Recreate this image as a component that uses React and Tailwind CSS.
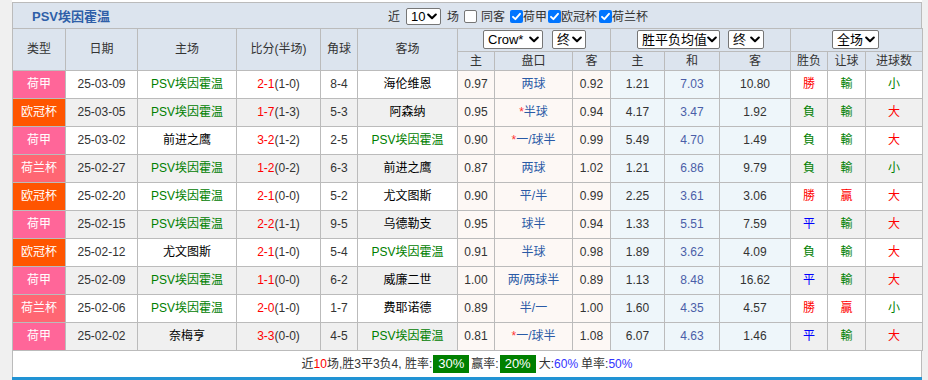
import React from "react";

const rows = [
  { t: "荷甲", d: "25-03-09", h: "PSV埃因霍温", hg: 1, s: "2-1", hs: "(1-0)", c: "8-4", a: "海伦维恩", ag: 0, o1: "0.97", pk: "两球", st: 0, o2: "0.92", w: "1.21", dr: "7.03", l: "10.80", r: "勝", rq: "輸", dx: "小" },
  { t: "欧冠杯", d: "25-03-05", h: "PSV埃因霍温", hg: 1, s: "1-7", hs: "(1-3)", c: "5-3", a: "阿森纳", ag: 0, o1: "0.95", pk: "半球", st: 1, o2: "0.94", w: "4.17", dr: "3.47", l: "1.92", r: "負", rq: "輸", dx: "大" },
  { t: "荷甲", d: "25-03-02", h: "前进之鹰", hg: 0, s: "3-2", hs: "(1-2)", c: "2-5", a: "PSV埃因霍温", ag: 1, o1: "0.90", pk: "一/球半", st: 1, o2: "0.99", w: "5.49", dr: "4.70", l: "1.49", r: "負", rq: "輸", dx: "大" },
  { t: "荷兰杯", d: "25-02-27", h: "PSV埃因霍温", hg: 1, s: "1-2", hs: "(0-2)", c: "6-3", a: "前进之鹰", ag: 0, o1: "0.87", pk: "两球", st: 0, o2: "1.02", w: "1.21", dr: "6.86", l: "9.79", r: "負", rq: "輸", dx: "小" },
  { t: "欧冠杯", d: "25-02-20", h: "PSV埃因霍温", hg: 1, s: "2-1", hs: "(0-0)", c: "5-2", a: "尤文图斯", ag: 0, o1: "0.90", pk: "平/半", st: 0, o2: "0.99", w: "2.25", dr: "3.61", l: "3.06", r: "勝", rq: "贏", dx: "大" },
  { t: "荷甲", d: "25-02-15", h: "PSV埃因霍温", hg: 1, s: "2-2", hs: "(1-1)", c: "9-5", a: "乌德勒支", ag: 0, o1: "0.95", pk: "球半", st: 0, o2: "0.94", w: "1.33", dr: "5.51", l: "7.59", r: "平", rq: "輸", dx: "大" },
  { t: "欧冠杯", d: "25-02-12", h: "尤文图斯", hg: 0, s: "2-1", hs: "(1-0)", c: "5-4", a: "PSV埃因霍温", ag: 1, o1: "0.91", pk: "半球", st: 0, o2: "0.98", w: "1.89", dr: "3.62", l: "4.09", r: "負", rq: "輸", dx: "大" },
  { t: "荷甲", d: "25-02-09", h: "PSV埃因霍温", hg: 1, s: "1-1", hs: "(0-0)", c: "6-2", a: "威廉二世", ag: 0, o1: "1.00", pk: "两/两球半", st: 0, o2: "0.89", w: "1.13", dr: "8.48", l: "16.62", r: "平", rq: "輸", dx: "大" },
  { t: "荷兰杯", d: "25-02-06", h: "PSV埃因霍温", hg: 1, s: "2-0", hs: "(1-0)", c: "1-7", a: "费耶诺德", ag: 0, o1: "0.89", pk: "半/一", st: 0, o2: "1.00", w: "1.60", dr: "4.35", l: "4.57", r: "勝", rq: "贏", dx: "小" },
  { t: "荷甲", d: "25-02-02", h: "奈梅亨", hg: 0, s: "3-3", hs: "(0-0)", c: "4-5", a: "PSV埃因霍温", ag: 1, o1: "0.81", pk: "一/球半", st: 1, o2: "1.08", w: "6.07", dr: "4.63", l: "1.46", r: "平", rq: "輸", dx: "大" },
];

const typeBg = {
  "荷甲": "bg-[#ff6699]",
  "欧冠杯": "bg-[#ff5500]",
  "荷兰杯": "bg-[#ff6673]",
};

const resColor = { "勝": "text-[#ff0000]", "負": "text-[#008000]", "平": "text-[#0000ff]", "輸": "text-[#008000]", "贏": "text-[#ff0000]", "小": "text-[#008000]", "大": "text-[#ff0000]" };

function Chevron() {
  return (
    <svg width="10" height="7" viewBox="0 0 10 7" className="shrink-0">
      <path d="M1.2 1.5 L5 5.2 L8.8 1.5" fill="none" stroke="#000" strokeWidth="2.1" strokeLinecap="round" strokeLinejoin="round" />
    </svg>
  );
}

function Sel({ label, className }) {
  return (
    <span className={"inline-flex items-center justify-between whitespace-nowrap border border-[#767676] rounded-[2px] bg-white pl-[4px] pr-[3px] text-[13px] leading-none text-black " + className}>
      <span className="whitespace-nowrap">{label}</span>
      <Chevron />
    </span>
  );
}

function Check({ on }) {
  if (!on) return <span className="inline-block w-[13px] h-[13px] border border-[#767676] rounded-[2px] bg-white" />;
  return (
    <span className="inline-flex items-center justify-center w-[13px] h-[13px] rounded-[2px] bg-[#0075ff]">
      <svg width="11" height="11" viewBox="0 0 11 11">
        <path d="M2 5.8 L4.4 8.2 L9 2.8" fill="none" stroke="#fff" strokeWidth="1.9" strokeLinecap="round" strokeLinejoin="round" />
      </svg>
    </span>
  );
}

const th = "border border-[#bbbbbb] bg-[#dce4ee] text-[#333] font-normal text-[12px] p-0 text-center whitespace-nowrap";
const td = "border border-[#bbbbbb] text-[12px] p-0 text-center whitespace-nowrap";

export default function App() {
  return (
    <div className="w-[928px] h-[380px] bg-[#f0f0f0] overflow-hidden [font-family:'Liberation_Sans','Noto_Sans_CJK_SC',sans-serif]">
      <div className="ml-[12px] w-[910px] h-[380px] bg-white pt-[2px] flex flex-col">
        <div className="h-[26px] border border-b-0 border-[#bbbbbb] bg-[#dce4ee] flex items-center pt-[3px] text-[12px] text-[#333] whitespace-nowrap">
          <div className="w-[375px] pl-[19px] text-[13px] font-bold text-[#2f5fa8]">PSV埃因霍温</div>
          <span>近</span>
          <Sel label="10" className="ml-[6px] w-[35px] h-[17px]" />
          <span className="ml-[6px]">场</span>
          <span className="ml-[5px] flex items-center"><Check on={false} /></span>
          <span className="ml-[4px]">同客</span>
          <span className="ml-[5px] flex items-center"><Check on /></span>
          <span>荷甲</span>
          <span className="ml-[1px] flex items-center"><Check on /></span>
          <span>欧冠杯</span>
          <span className="ml-[2px] flex items-center"><Check on /></span>
          <span>荷兰杯</span>
        </div>
        <table className="w-[910px] table-fixed border-collapse">
          <colgroup>
            <col className="w-[53px]" />
            <col className="w-[72px]" />
            <col className="w-[99px]" />
            <col className="w-[84px]" />
            <col className="w-[37px]" />
            <col className="w-[100px]" />
            <col className="w-[37px]" />
            <col className="w-[78px]" />
            <col className="w-[38px]" />
            <col className="w-[54px]" />
            <col className="w-[55px]" />
            <col className="w-[71px]" />
            <col className="w-[37px]" />
            <col className="w-[38px]" />
            <col className="w-[57px]" />
          </colgroup>
          <thead>
            <tr className="h-[23px]">
              <th rowSpan={2} className={th}>类型</th>
              <th rowSpan={2} className={th}>日期</th>
              <th rowSpan={2} className={th}>主场</th>
              <th rowSpan={2} className={th}>比分(半场)</th>
              <th rowSpan={2} className={th}>角球</th>
              <th rowSpan={2} className={th}>客场</th>
              <th colSpan={3} className={th}>
                <div className="flex justify-center gap-[9px] pl-[1px]">
                  <Sel label="Crow*" className="w-[60px] h-[19px]" />
                  <Sel label="终" className="w-[34px] h-[19px]" />
                </div>
              </th>
              <th colSpan={3} className={th}>
                <div className="flex justify-center gap-[8px]">
                  <Sel label="胜平负均值" className="w-[83px] h-[19px]" />
                  <Sel label="终" className="w-[36px] h-[19px]" />
                </div>
              </th>
              <th colSpan={3} className={th}>
                <div className="flex justify-center pr-[2px]">
                  <Sel label="全场" className="w-[47px] h-[19px]" />
                </div>
              </th>
            </tr>
            <tr className="h-[18px]">
              <th className={th}>主</th>
              <th className={th}>盘口</th>
              <th className={th}>客</th>
              <th className={th}>主</th>
              <th className={th}>和</th>
              <th className={th}>客</th>
              <th className={th}>胜负</th>
              <th className={th}>让球</th>
              <th className={th}>进球数</th>
            </tr>
          </thead>
          <tbody>
            {rows.map((r, i) => {
              const alt = i % 2 === 1 ? "bg-[#f0f0f0]" : "bg-white";
              return (
                <tr key={i} className="h-[28px]">
                  <td className={td + " text-white " + typeBg[r.t]}>{r.t}</td>
                  <td className={td + " text-[#333] " + alt}>{r.d}</td>
                  <td className={td + " " + alt + (r.hg ? " text-[#008000]" : " text-black")}>{r.h}</td>
                  <td className={td + " text-[#333] " + alt}>
                    <span className="text-[#ff0000]">{r.s}</span>
                    <span>{r.hs}</span>
                  </td>
                  <td className={td + " text-[#333] " + alt}>{r.c}</td>
                  <td className={td + " " + alt + (r.ag ? " text-[#008000]" : " text-black")}>{r.a}</td>
                  <td className={td + " text-[#333] bg-[#fdf8f5]"}>{r.o1}</td>
                  <td className={td + " text-[#2a5aa6] bg-[#fdf8f5]"}>
                    {r.st ? <span className="text-[#ff3333]">*</span> : null}
                    {r.pk}
                  </td>
                  <td className={td + " text-[#333] bg-[#fdf8f5]"}>{r.o2}</td>
                  <td className={td + " text-[#333] bg-[#eef6fa]"}>{r.w}</td>
                  <td className={td + " text-[#4a5ea8] bg-[#eef6fa]"}>{r.dr}</td>
                  <td className={td + " text-[#333] bg-[#eef6fa]"}>{r.l}</td>
                  <td className={td + " " + alt + " " + resColor[r.r]}>{r.r}</td>
                  <td className={td + " " + alt + " " + resColor[r.rq]}>{r.rq}</td>
                  <td className={td + " " + alt + " " + resColor[r.dx]}>{r.dx}</td>
                </tr>
              );
            })}
          </tbody>
        </table>
        <div className="h-[27px] border-l border-r border-[#bbbbbb] flex items-center justify-center text-[12px] text-[#333] whitespace-nowrap">
          <span>近</span>
          <span className="text-[#ff0000]">10</span>
          <span>场,胜3平3负4, 胜率:</span>
          <span className="ml-[1px] bg-[#008000] text-white text-[13px] h-[18px] px-[5px] flex items-center">30%</span>
          <span className="ml-[2px]">赢率:</span>
          <span className="ml-[1px] bg-[#008000] text-white text-[13px] h-[18px] px-[5px] flex items-center">20%</span>
          <span className="ml-[3px]">大:</span>
          <span className="text-[#3333ff]">60%</span>
          <span className="ml-[3px]">单率:</span>
          <span className="text-[#3333ff]">50%</span>
        </div>
        <div className="h-[3px] bg-[#2193d4]" />
      </div>
    </div>
  );
}
